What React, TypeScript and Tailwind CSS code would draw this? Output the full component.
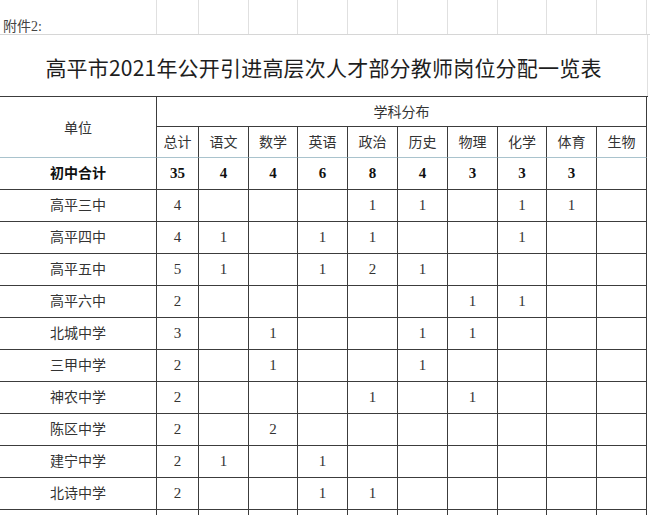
const cols = 'grid-cols-[157px_42px_50px_49px_50px_50px_50px_50px_49px_50px_50px]'

const subjects = ['总计', '语文', '数学', '英语', '政治', '历史', '物理', '化学', '体育', '生物']

// 总计, 语文, 数学, 英语, 政治, 历史, 物理, 化学, 体育, 生物
const schools: [string, string[]][] = [
  ['高平三中', ['4', '', '', '', '1', '1', '', '1', '1', '']],
  ['高平四中', ['4', '1', '', '1', '1', '', '', '1', '', '']],
  ['高平五中', ['5', '1', '', '1', '2', '1', '', '', '', '']],
  ['高平六中', ['2', '', '', '', '', '', '1', '1', '', '']],
  ['北城中学', ['3', '', '1', '', '', '1', '1', '', '', '']],
  ['三甲中学', ['2', '', '1', '', '', '1', '', '', '', '']],
  ['神农中学', ['2', '', '', '', '1', '', '1', '', '', '']],
  ['陈区中学', ['2', '', '2', '', '', '', '', '', '', '']],
  ['建宁中学', ['2', '1', '', '1', '', '', '', '', '', '']],
  ['北诗中学', ['2', '', '', '1', '1', '', '', '', '', '']],
  ['', ['', '', '', '', '', '', '', '', '', '']],
]

const total = ['35', '4', '4', '6', '8', '4', '3', '3', '3', '']

export default function App() {
  return (
    <div className="w-[650px] h-[515px] overflow-hidden bg-white text-[#333] font-['Liberation_Serif','Noto_Sans_CJK_SC',serif]">
      {/* sheet rows above the table */}
      <div className={`grid ${cols} h-[35px] border-b border-[#d6d6d6]`}>
        <div className="pl-[3px] pt-[21px] text-[14px] leading-[12px] text-[#444] border-r border-[#e0e0e0]">
          附件2:
        </div>
        {subjects.map((s) => (
          <div key={s} className="border-r border-[#e0e0e0]" />
        ))}
      </div>
      <div className="w-[648px] h-[61px] flex items-center justify-center pt-[5px] border-r border-[#e0e0e0]">
        <h1 className="text-[21px] text-[#1e1e1e] font-['Noto_Sans_CJK_SC',sans-serif] tracking-[0.2px]">
          高平市2021年公开引进高层次人才部分教师岗位分配一览表
        </h1>
      </div>

      {/* table */}
      <div className={`grid ${cols} w-[648px] border-t border-[#3c3c3c] text-[14px]`}>
        <div className="row-span-2 flex items-center justify-center border-r border-[#3c3c3c] border-b border-b-[#a9c3cd] pt-[2px]">
          单位
        </div>
        <div className="col-span-10 h-[30px] flex items-center justify-center border-r border-[#3c3c3c] border-b border-b-[#3c3c3c] pt-[2px]">
          学科分布
        </div>
        {subjects.map((s) => (
          <div key={s} className="h-[31px] flex items-center justify-center pt-[1px] border-r border-[#3c3c3c] border-b border-b-[#a9c3cd]">
            {s}
          </div>
        ))}

        <div className="h-[32px] flex items-center justify-center font-bold text-[#111] border-r border-b border-[#3c3c3c]">
          初中合计
        </div>
        {total.map((v, i) => (
          <div key={i} className="h-[32px] flex items-center justify-center font-bold text-[15px] text-[#111] border-r border-b border-[#3c3c3c]">
            {v}
          </div>
        ))}

        {schools.map(([name, vals], r) => (
          <>
            <div key={`n${r}`} className="h-[32px] flex items-center justify-center border-r border-b border-[#3c3c3c]">
              {name}
            </div>
            {vals.map((v, i) => (
              <div key={`${r}-${i}`} className="h-[32px] flex items-center justify-center text-[15px] border-r border-b border-[#3c3c3c]">
                {v}
              </div>
            ))}
          </>
        ))}
      </div>
    </div>
  )
}
